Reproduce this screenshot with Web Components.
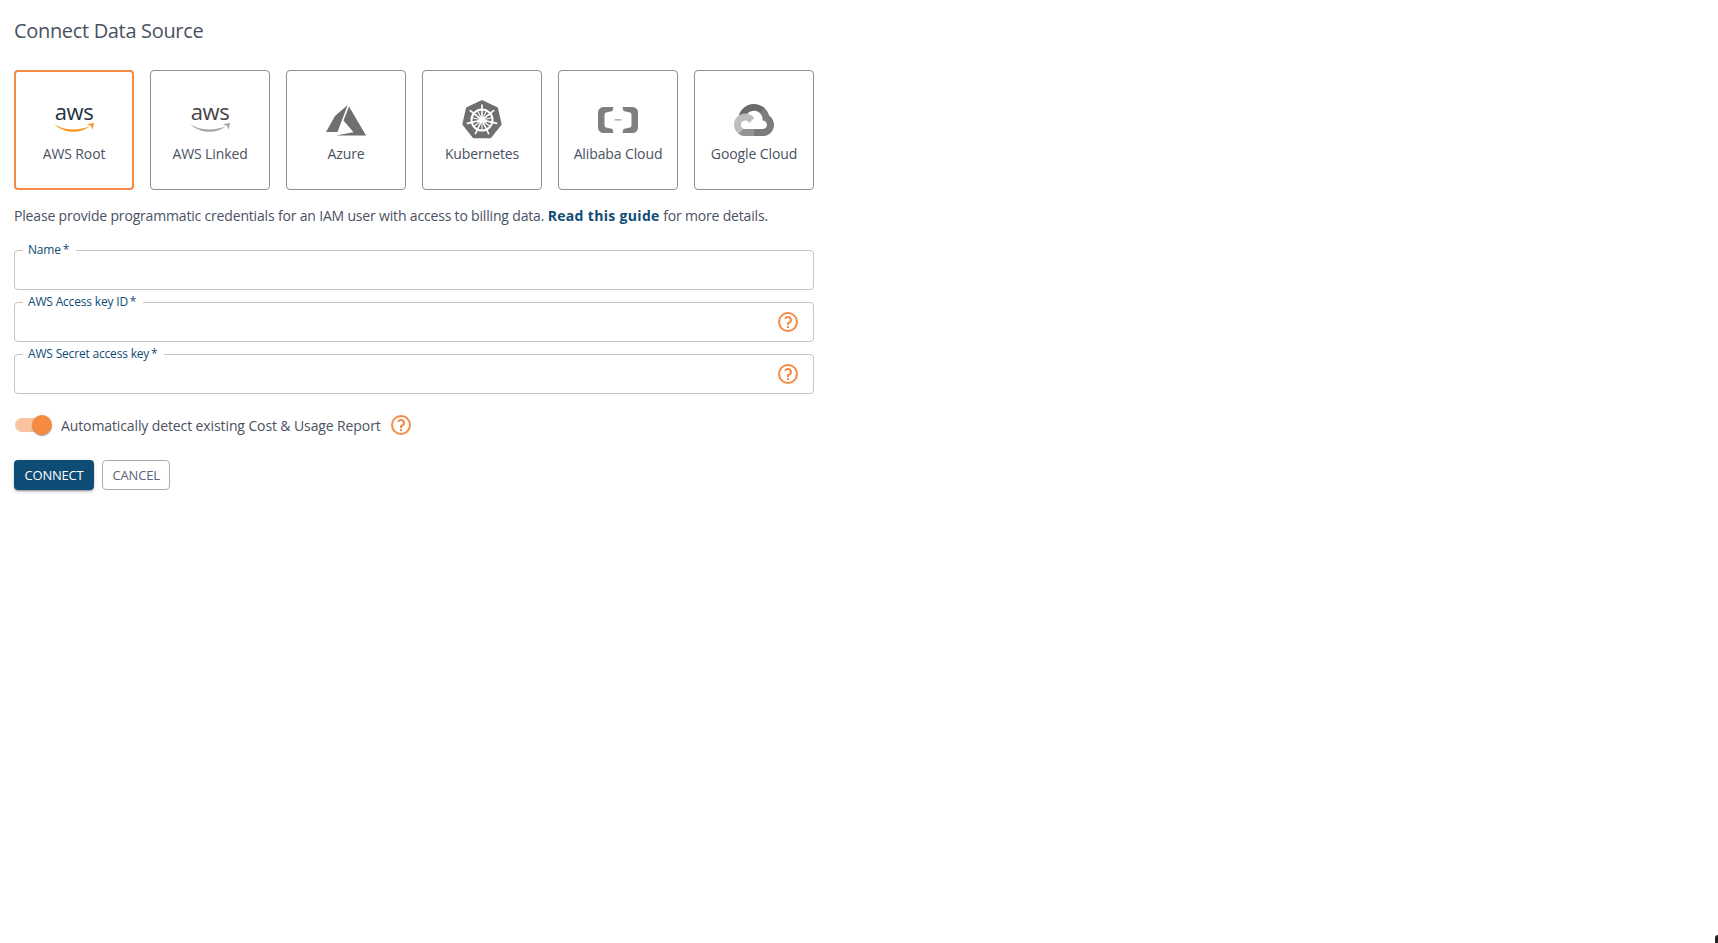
<!DOCTYPE html>
<html lang="en">
<head>
<meta charset="utf-8">
<title>Connect Data Source</title>
<style>
    html, body { height: 100%; }
    body {
        margin: 0;
        background: #fff;
        color: #4a5162;
        font-family: "Open Sans", "Noto Sans", sans-serif;
        overflow: hidden;
    }
</style>
</head>
<body>
<connect-form></connect-form>
<span class="corner" style="position:fixed;right:0;bottom:0;width:3px;height:8px;background:#222;border-radius:3px 0 0 0"></span>

<script>
const awsIcon = (text, smile) => `<span class="aws" style="color:${text}">aws</span><svg width="40" height="18" viewBox="0 22 40 18"><path d="M0 24C10 31 26 31 36 26 27 34 10 34 0 24z" fill="${smile}"/><path d="M33 24.200 40 23 38.500 30 37.300 26z" fill="${smile}"/></svg>`

const ICONS = {
    awsRoot: awsIcon('#232f3e', '#f7941d'),
    awsLinked: awsIcon('#444', '#a3a3a3'),
    azure: `<svg width="40" height="40" viewBox="0 0 40 40"><path d="M21.700 5 9 16 0 32h11.500z" fill="#6f6f6f"/><path d="M23 6.500 40 35.500H10l17.500-3.200L17.500 20.500z" fill="#6f6f6f"/></svg>`,
    k8s: `<svg width="40" height="40" viewBox="0 0 40 40"><path d="M20 1.500 34.800 8.500 38.400 24.200 28.200 37H11.800L1.600 24.200 5.200 8.500z" fill="#6f6f6f" stroke="#6f6f6f" stroke-width="2.500" stroke-linejoin="round"/><g stroke="#fff" fill="none" stroke-linecap="round"><circle cx="20" cy="20" r="10.500" stroke-width="2"/><circle cx="20" cy="20" r="2.200" fill="#fff" stroke="none"/><path stroke-width="1.700" d="M20 20V5M20 20 31.700 10.650M20 20 34.600 23.300M20 20 26.500 33.500M20 20 13.500 33.500M20 20 5.400 23.300M20 20 8.300 10.650"/><path stroke-width="1.100" d="M20 20 24.300 11M20 20 29.750 17.800M20 20 27.800 26.200M20 20V30M20 20 12.200 26.200M20 20 10.250 17.800M20 20 15.700 11"/></g></svg>`,
    alibaba: `<svg width="40" height="40" viewBox="0 0 40 40"><path d="M15.500 7H5.500A5.500 5.500 0 0 0 0 12.500v15A5.500 5.500 0 0 0 5.500 33h10l-1-4-6.500-1.500a2 2 0 0 1-1.500-2v-11a2 2 0 0 1 1.500-2l6.500-1.500z" fill="#7f7f7f"/><path d="M24.500 7h10a5.500 5.500 0 0 1 5.500 5.500v15a5.500 5.500 0 0 1-5.500 5.500h-10l1-4 6.500-1.500a2 2 0 0 0 1.500-2v-11a2 2 0 0 0-1.500-2l-6.500-1.500z" fill="#7f7f7f"/><rect x="16.500" y="19" width="7" height="1.600" fill="#b5b5b5"/></svg>`,
    gcloud: `<svg width="40" height="40" viewBox="0 0 256 256"><g transform="translate(0 25)"><path d="M170.250 56.820l22.250-22.250 1.490-9.370C153.440-11.680 88.980-7.500 52.420 33.920 42.270 45.420 34.730 59.760 30.720 74.570l7.970-1.120 44.500-7.340 3.440-3.510c19.800-21.740 53.270-24.670 76.130-6.170z" fill="#6b6b6b"/><path d="M224.200 73.920c-5.110-18.840-15.620-35.770-30.220-48.720l-31.230 31.230c13.190 10.780 20.700 27.010 20.380 44.040v5.540c15.350 0 27.800 12.450 27.800 27.800 0 15.350-12.450 27.480-27.800 27.480h-55.670l-5.470 5.930v33.340l5.470 5.230h55.670c39.930.31 72.550-31.490 72.870-71.420.19-24.200-11.750-46.890-31.800-60.450" fill="#7c7c7c"/><path d="M71.870 205.800h55.590v-44.510H71.870c-3.960 0-7.800-.85-11.400-2.500l-7.890 2.420-22.410 22.250-1.950 7.570c12.570 9.490 27.900 14.830 43.650 14.760" fill="#939393"/><path d="M71.870 61.430C31.940 61.660-.24 94.230 0 134.160c.13 22.300 10.550 43.290 28.220 56.880l32.250-32.250c-13.990-6.320-20.210-22.790-13.890-36.780 6.320-13.990 22.790-20.210 36.780-13.890 6.160 2.790 11.100 7.720 13.880 13.890l32.250-32.250C115.770 71.830 94.450 61.340 71.870 61.430" fill="#bdbdbd"/></g></svg>`
}

class HelpIcon extends HTMLElement {
    constructor() {
        super()
        this.attachShadow({ mode: 'open' })
        this.shadowRoot.innerHTML = `
            <style>
                :host { display: inline-flex; width: 24px; height: 24px; }
                svg { display: block; }
            </style>
            <svg width="24" height="24" viewBox="0 0 24 24" fill="#f58a42"><path d="M12 2a10 10 0 1 0 0 20 10 10 0 0 0 0-20zm0 18a8 8 0 1 1 0-16 8 8 0 0 1 0 16zm-1-4h2v2h-2zm1.600-9.940a4 4 0 0 0-4.430 2.510l1.880.68A2 2 0 1 1 12 12a1 1 0 0 0-1 1v2h2v-1.140a4 4 0 0 0-.4-7.800z"/></svg>
        `
    }
}

class SourceTab extends HTMLElement {
    constructor() {
        super()
        this.attachShadow({ mode: 'open' })
    }
    connectedCallback() {
        this.shadowRoot.innerHTML = `
            <style>
                :host {
                    display: flex;
                    flex-direction: column;
                    align-items: center;
                    box-sizing: border-box;
                    width: 120px;
                    height: 120px;
                    padding-top: 29px;
                    border: 1px solid #8f8f8f;
                    border-radius: 4px;
                    font-size: 14px;
                    color: #4a5162;
                }
                :host([selected]) {
                    border: 2px solid #f58a42;
                    padding-top: 28px;
                }
                .icon { display: flex; flex-direction: column; align-items: center; width: 40px; height: 40px; }
                .aws {
                    display: block;
                    height: 22px;
                    font-size: 22px;
                    font-weight: 500;
                    line-height: 23px;
                    letter-spacing: -.4px;
                }
                .label { margin-top: 4px; line-height: 20px; white-space: nowrap; }
                svg { display: block; flex: none; }
            </style>
            <span class="icon">${ICONS[this.getAttribute('icon')]}</span>
            <span class="label"><slot></slot></span>
        `
    }
}

class TextField extends HTMLElement {
    constructor() {
        super()
        this.attachShadow({ mode: 'open' })
    }
    connectedCallback() {
        this.shadowRoot.innerHTML = `
            <style>
                :host {
                    display: flex;
                    position: relative;
                    align-items: center;
                    justify-content: flex-end;
                    box-sizing: border-box;
                    height: 40px;
                    margin-bottom: 12px;
                    padding-right: 13px;
                    border: 1px solid #c4c4c4;
                    border-radius: 4px;
                }
                .label {
                    position: absolute;
                    top: -8px;
                    left: 8px;
                    padding: 0 7px 0 5px;
                    background: #fff;
                    font-size: 12px;
                    line-height: 14px;
                    letter-spacing: -.18px;
                    color: #0f4c75;
                    white-space: nowrap;
                }
            </style>
            <span class="label"><slot></slot>&thinsp;*</span>
            ${this.hasAttribute('help') ? '<help-icon></help-icon>' : ''}
        `
    }
}

class ToggleSwitch extends HTMLElement {
    constructor() {
        super()
        this.attachShadow({ mode: 'open' })
        this.shadowRoot.innerHTML = `
            <style>
                :host { display: inline-block; position: relative; width: 38px; height: 20px; }
                .track {
                    display: block;
                    width: 34px;
                    height: 14px;
                    margin: 3px 0 0 1px;
                    border-radius: 7px;
                    background: #f58a42;
                    opacity: .5;
                }
                .thumb {
                    position: absolute;
                    top: 0;
                    right: 0;
                    width: 20px;
                    height: 20px;
                    border-radius: 50%;
                    background: #f58a42;
                    box-shadow: 0 2px 1px -1px rgba(0,0,0,.2), 0 1px 1px 0 rgba(0,0,0,.14), 0 1px 3px 0 rgba(0,0,0,.12);
                }
            </style>
            <span class="track"></span><span class="thumb"></span>
        `
    }
}

class AppButton extends HTMLElement {
    constructor() {
        super()
        this.attachShadow({ mode: 'open' })
        this.shadowRoot.innerHTML = `
            <style>
                :host {
                    display: inline-flex;
                    align-items: center;
                    justify-content: center;
                    box-sizing: border-box;
                    height: 30px;
                    padding: 0 9.5px;
                    border: 1px solid #a9adb8;
                    border-radius: 4px;
                    font-size: 13px;
                    letter-spacing: -.2px;
                    color: #5b6378;
                }
                :host([primary]) {
                    border: 0;
                    padding: 0 10.5px;
                    background: #0f4c75;
                    color: #fff;
                    box-shadow: 0 3px 1px -2px rgba(0,0,0,.2), 0 2px 2px 0 rgba(0,0,0,.14), 0 1px 5px 0 rgba(0,0,0,.12);
                }
            </style>
            <slot></slot>
        `
    }
}

class ConnectForm extends HTMLElement {
    constructor() {
        super()
        this.attachShadow({ mode: 'open' })
        this.shadowRoot.innerHTML = `
            <style>
                :host { display: block; width: 800px; padding: 16px 14px; font-size: 14px; letter-spacing: -.11px; }
                h1 { margin: 0 0 24px; font-size: 20px; line-height: 30px; font-weight: 400; letter-spacing: -.33px; color: #4a5162; }
                .tabs { display: flex; gap: 16px; }
                p { margin: 16px 0 24px; line-height: 20px; letter-spacing: -.175px; white-space: nowrap; }
                a { color: #0f4c75; font-weight: 700; letter-spacing: .33px; text-decoration: none; }
                .switch { display: flex; align-items: center; gap: 9px; margin-top: 19px; height: 24px; }
                .switch help-icon { margin-left: -1px; }
                .actions { display: flex; gap: 8px; margin-top: 23px; }
            </style>
            <h1>Connect Data Source</h1>
            <div class="tabs">
                <source-tab icon="awsRoot" selected>AWS Root</source-tab>
                <source-tab icon="awsLinked">AWS Linked</source-tab>
                <source-tab icon="azure">Azure</source-tab>
                <source-tab icon="k8s">Kubernetes</source-tab>
                <source-tab icon="alibaba">Alibaba Cloud</source-tab>
                <source-tab icon="gcloud">Google Cloud</source-tab>
            </div>
            <p>Please provide programmatic credentials for an IAM user with access to billing data. <a href="#">Read this guide</a> for more details.</p>
            <text-field>Name</text-field>
            <text-field help>AWS Access key ID</text-field>
            <text-field help>AWS Secret access key</text-field>
            <div class="switch">
                <toggle-switch></toggle-switch>
                <span>Automatically detect existing Cost &amp; Usage Report</span>
                <help-icon></help-icon>
            </div>
            <div class="actions">
                <app-button primary>CONNECT</app-button>
                <app-button>CANCEL</app-button>
            </div>
        `
    }
}

customElements.define('help-icon', HelpIcon)
customElements.define('source-tab', SourceTab)
customElements.define('text-field', TextField)
customElements.define('toggle-switch', ToggleSwitch)
customElements.define('app-button', AppButton)
customElements.define('connect-form', ConnectForm)
</script>
</body>
</html>
